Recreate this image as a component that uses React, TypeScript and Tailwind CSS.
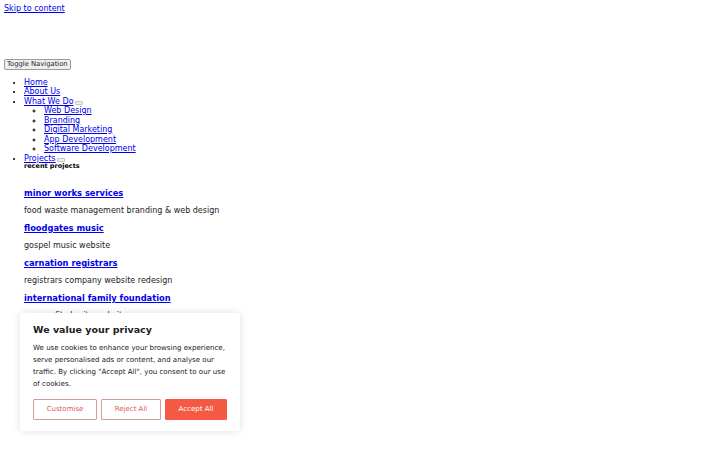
const navLink = "text-[#0000ee] underline";

const subItems = [
	"Web Design",
	"Branding",
	"Digital Marketing",
	"App Development",
	"Software Development",
];

const projects = [
	{ title: "minor works services", desc: "food waste management branding & web design" },
	{ title: "floodgates music", desc: "gospel music website" },
	{ title: "carnation registrars", desc: "registrars company website redesign" },
	{ title: "international family foundation", desc: "non-profit charity website" },
];

const SubToggle = () => (
	<span className="inline-block w-[8px] h-[4px] ml-[1px] align-[-1px] border border-[#c4c4c4] bg-[#efefef] rounded-[1px]" />
);

const CookieBanner = () => (
	<div className="absolute left-[20px] top-[313px] w-[220px] bg-white rounded-[3px] shadow-[0_0_8px_rgba(0,0,0,0.12)] px-[13px] pt-[10px] pb-[11px]">
		<div className="text-[9.5px] leading-[13px] font-bold text-[#212121]">
			We value your privacy
		</div>
		<p className="mt-[6px] text-[7.05px] leading-[12px] text-[#212121]">
			We use cookies to enhance your browsing experience, serve personalised ads or content, and
			analyse our traffic. By clicking "Accept All", you consent to our use of cookies.
		</p>
		<div className="mt-[9px] flex gap-[4px]">
			<button className="w-[64px] h-[21px] border-[1.5px] border-[#d99a95] rounded-[1px] text-[#e0604f] text-[7px]">
				Customise
			</button>
			<button className="w-[60px] h-[21px] border-[1.5px] border-[#d99a95] rounded-[1px] text-[#e0604f] text-[7px]">
				Reject All
			</button>
			<button className="w-[62px] h-[21px] bg-[#f45a43] border-[1.5px] border-[#f45a43] rounded-[1px] text-white text-[7px]">
				Accept All
			</button>
		</div>
	</div>
);

export default function App() {
	return (
		<div
			className="relative w-[720px] h-[450px] bg-white overflow-hidden text-[8px] leading-[9.5px] text-black p-[4px]"
			style={{ fontFamily: '"DejaVu Sans", sans-serif' }}
		>
			<a href="#content" className={navLink}>
				Skip to content
			</a>

			<div className="h-[45px]" />

			<button className="block h-[11px] px-[2px] border border-[#9a9a9a] bg-[#efefef] rounded-[2px] text-[6.8px] leading-[9px] text-[#222]">
				Toggle Navigation
			</button>

			<ul className="mt-[8px] pl-[20px] list-disc">
				<li>
					<a className={navLink}>Home</a>
				</li>
				<li>
					<a className={navLink}>About Us</a>
				</li>
				<li>
					<a className={navLink}>What We Do</a>
					<SubToggle />
					<ul className="pl-[20px] [list-style-type:circle]">
						{subItems.map((s) => (
							<li key={s} className="[list-style-type:circle]">
								<a className={navLink}>{s}</a>
							</li>
						))}
					</ul>
				</li>
				<li>
					<a className={navLink}>Projects</a>
					<SubToggle />
					<div>
						<div className="text-[6.5px] leading-[7px] font-bold">recent projects</div>
						<div className="mt-[18px]">
							{projects.map((p) => (
								<div key={p.title}>
									<a className="text-[#0000ee] underline font-bold text-[8.3px] leading-[10px] block">
										{p.title}
									</a>
									<p className="mt-[8px] mb-[7.5px] text-[#222]">{p.desc}</p>
								</div>
							))}
						</div>
					</div>
				</li>
			</ul>

			<CookieBanner />
		</div>
	);
}
